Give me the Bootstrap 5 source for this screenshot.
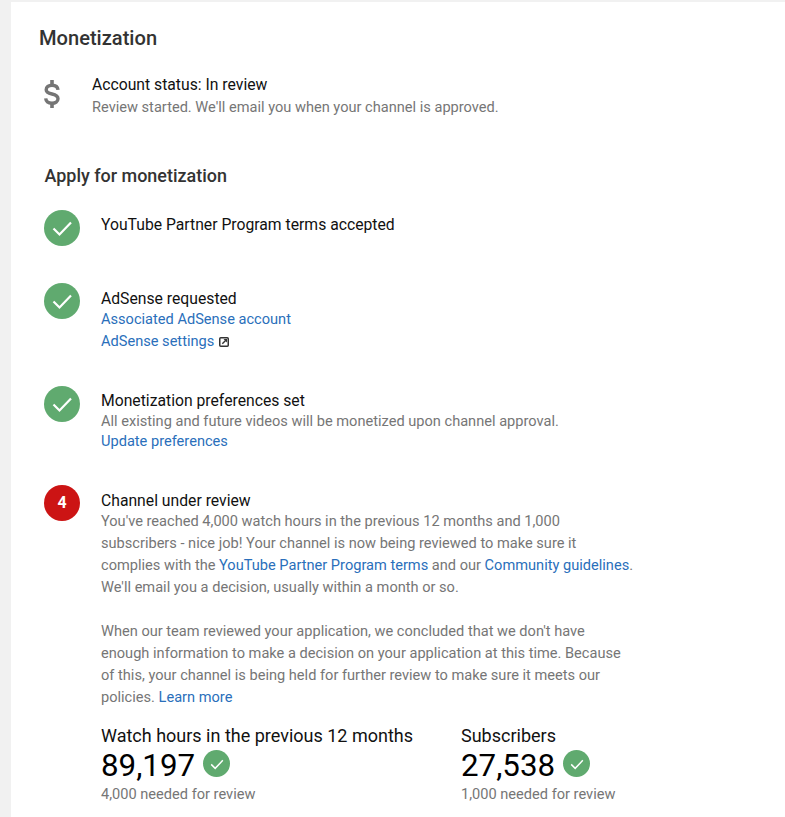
<!DOCTYPE html>
<html><head><meta charset="utf-8">
<link href="https://cdn.jsdelivr.net/npm/bootstrap@5.3.0/dist/css/bootstrap.min.css" rel="stylesheet">
<style>
html,body{height:817px;overflow:hidden}
body{background:#f1f1f1;font-family:Roboto,sans-serif;font-size:14.6px;line-height:22px;color:#111}
.sheet{margin-left:11px;margin-top:2px;background:#fff;height:815px;padding:0 0 0 28px;overflow:hidden}
.title{font-size:20.1px;font-weight:500;line-height:28px;color:#333;padding-top:22px;margin:0}
.status{margin-top:22px;height:48px}
.dollar{width:53px;flex:none;padding:6px 0 0 4px}
.dollar svg{display:block}
.txt-main{font-size:15.73px;line-height:21px;color:#111}
.status .txt-main{line-height:22px}
.txt-mute{color:#767676;font-size:14.6px;line-height:22px;white-space:nowrap}
.tight{line-height:20px}
.lower .tight.txt-main{line-height:19px}
.subtitle{font-size:17.95px;font-weight:500;line-height:26px;color:#333;margin:41px 0 0 5.500px}
.step{margin-left:5px;width:590px}
.step-body{padding-top:4px}
.step-body.lower{padding-top:6px}
.bullet{width:36px;height:36px;border-radius:50%;flex:none;margin-right:21px;background:#60aa6f;color:#fff;font-weight:700;font-size:16px}
.bullet.red{background:#cc1414}
.lnk{color:#2a6fbb;text-decoration:none}
.st1{margin-top:21px;height:73px}
.st2{height:103px}
.st3{height:99px}
.stat-label{font-size:18px;line-height:24px;color:#111;white-space:nowrap}
.stat-big{font-size:31.3px;line-height:35px;color:#000}
.mini{width:27px;height:27px;border-radius:50%;background:#60aa6f;flex:none;margin-left:8px;margin-top:-4px}
.stat1{width:360px}
.stat-row{margin-top:16px}
.ext{margin-left:5px;vertical-align:-1px}
.gapped{margin-top:22px}
</style></head>
<body>
<div class="sheet">
<h1 class="title">Monetization</h1>
<div class="status d-flex">
<div class="dollar"><svg width="18" height="28" viewBox="0 0 18 28"><path d="M7.200 0h3.600v4.500H7.200zM7.200 23.500h3.600V28H7.200z" fill="#757575"/><path d="M15 9.800C14.700 6.800 12.300 5.300 9 5.300 5.600 5.300 3.200 7 3.200 9.700c0 2.800 2.800 3.600 5.800 4.300 3.400.8 6 1.800 6 4.800 0 2.700-2.600 4.400-6 4.400-3.500 0-6-1.700-6.300-4.800" fill="none" stroke="#757575" stroke-width="3.400"/></svg></div>
<div><div class="txt-main">Account status: In review</div><div class="txt-mute">Review started. We'll email you when your channel is approved.</div></div>
</div>
<h2 class="subtitle">Apply for monetization</h2>
<div class="step st1 d-flex">
<div class="bullet d-flex align-items-center justify-content-center"><svg width="22" height="22" viewBox="0 0 22 22"><path d="M2.500 11.500l6 6L20 5.500" fill="none" stroke="#fff" stroke-width="2.200"/></svg></div>
<div class="step-body"><div class="txt-main">YouTube Partner Program terms accepted</div></div>
</div>
<div class="step st2 d-flex">
<div class="bullet d-flex align-items-center justify-content-center"><svg width="22" height="22" viewBox="0 0 22 22"><path d="M2.500 11.500l6 6L20 5.500" fill="none" stroke="#fff" stroke-width="2.200"/></svg></div>
<div class="step-body lower"><div class="txt-main tight">AdSense requested</div><div><a class="lnk" href="#">Associated AdSense account</a></div><div><a class="lnk" href="#">AdSense settings</a><svg class="ext" width="10" height="10" viewBox="0 0 10 10"><rect x=".75" y=".75" width="8.500" height="8.500" rx="1" fill="none" stroke="#333" stroke-width="1.500"/><path d="M3.300 6.700 6.800 3.200" stroke="#333" stroke-width="1.400"/><path d="M4.500 2h3.500v3.500z" fill="#333"/></svg></div></div>
</div>
<div class="step st3 d-flex">
<div class="bullet d-flex align-items-center justify-content-center"><svg width="22" height="22" viewBox="0 0 22 22"><path d="M2.500 11.500l6 6L20 5.500" fill="none" stroke="#fff" stroke-width="2.200"/></svg></div>
<div class="step-body"><div class="txt-main">Monetization preferences set</div><div class="txt-mute tight">All existing and future videos will be monetized upon channel approval.</div><div class="tight"><a class="lnk" href="#">Update preferences</a></div></div>
</div>
<div class="step d-flex">
<div class="bullet red d-flex align-items-center justify-content-center">4</div>
<div class="flex-grow-1 step-body lower"><div class="txt-main tight">Channel under review</div>
<div class="txt-mute">You've reached 4,000 watch hours in the previous 12 months and 1,000<br>subscribers - nice job! Your channel is now being reviewed to make sure it<br>complies with the <a class="lnk" href="#">YouTube Partner Program terms</a> and our <a class="lnk" href="#">Community guidelines</a>.<br>We'll email you a decision, usually within a month or so.</div>
<div class="txt-mute gapped">When our team reviewed your application, we concluded that we don't have<br>enough information to make a decision on your application at this time. Because<br>of this, your channel is being held for further review to make sure it meets our<br>policies. <a class="lnk" href="#">Learn more</a></div>
<div class="stat-row d-flex">
<div class="stat1"><div class="stat-label">Watch hours in the previous 12 months</div><div class="d-flex align-items-center"><span class="stat-big">89,197</span><span class="mini d-flex align-items-center justify-content-center"><svg width="16" height="16" viewBox="0 0 22 22"><path d="M3 11.500l5.500 5.500L19 6" fill="none" stroke="#fff" stroke-width="2"/></svg></span></div><div class="txt-mute">4,000 needed for review</div></div>
<div><div class="stat-label">Subscribers</div><div class="d-flex align-items-center"><span class="stat-big">27,538</span><span class="mini d-flex align-items-center justify-content-center"><svg width="16" height="16" viewBox="0 0 22 22"><path d="M3 11.500l5.500 5.500L19 6" fill="none" stroke="#fff" stroke-width="2"/></svg></span></div><div class="txt-mute">1,000 needed for review</div></div>
</div>
</div>
</div>
</div>
<script src="https://cdn.jsdelivr.net/npm/bootstrap@5.3.0/dist/js/bootstrap.bundle.min.js"></script>
</body></html>
